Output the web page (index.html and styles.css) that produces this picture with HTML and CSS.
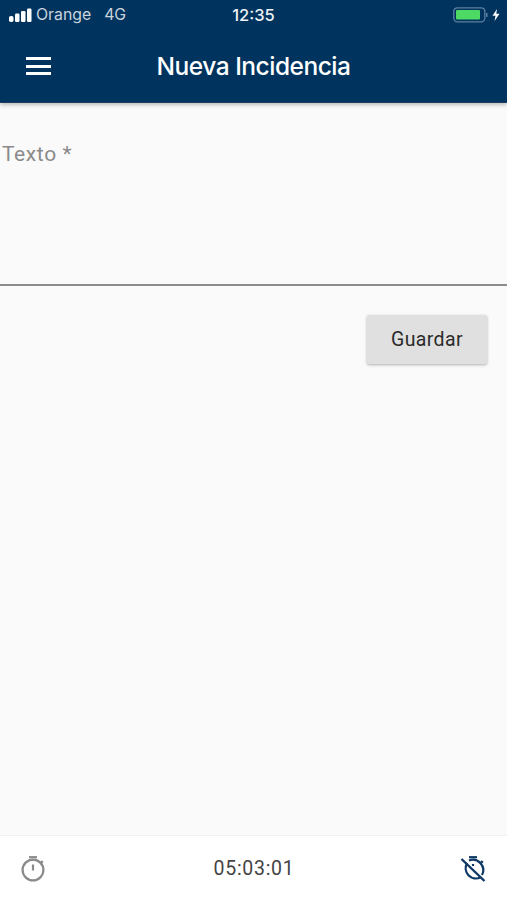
FILE: index.html
```
<!DOCTYPE html>
<html lang="es">
<head>
<meta charset="utf-8">
<title>Nueva Incidencia</title>
<link rel="stylesheet" href="styles.css">
</head>
<body>
<div class="app">
  <header class="header">
    <div class="status">
      <div class="status-left">
        <svg class="signal" width="23" height="14" viewBox="0 0 23 14"><rect x="0" y="8" width="4.500" height="6" rx="1.800"/><rect x="6" y="5.500" width="4.500" height="8.500" rx="1.200"/><rect x="12" y="3" width="4.500" height="11" rx="1.200"/><rect x="18" y="0.500" width="4.500" height="13.500" rx="1.200"/></svg>
        <span class="carrier">Orange</span>
        <span class="net">4G</span>
      </div>
      <div class="clock">12:35</div>
      <div class="status-right">
        <svg width="36" height="16" viewBox="0 0 36 16"><rect x="0.800" y="0.800" width="31" height="14" rx="3.500" fill="none" stroke="#5d7f9f" stroke-width="1.300"/><rect x="3" y="3" width="24" height="9.500" rx="1" fill="#4cd964"/><rect x="33" y="6" width="1.500" height="4" fill="#5d7f9f"/></svg>
        <svg width="8" height="12" viewBox="0 0 8 12"><path d="M5 0 L0.500 6.800 H3.500 L2.600 12 L7.500 4.800 H4.300 Z" fill="#fff"/></svg>
      </div>
    </div>
    <div class="toolbar">
      <button class="menu" aria-label="Menu"><span></span><span></span><span></span></button>
      <h1 class="title">Nueva Incidencia</h1>
    </div>
  </header>
  <main class="content">
    <div class="field">
      <label class="label">Texto *</label>
    </div>
    <div class="actions"><button class="save">Guardar</button></div>
  </main>
  <footer class="footer">
    <svg class="timer" width="28" height="28" viewBox="0 0 28 28" fill="none" stroke="#8a8a8a" stroke-width="2.200"><path d="M10 3.200 H18"/><circle cx="14" cy="16" r="10.400"/><path d="M14 10.500 V16.500"/><path d="M22 7 L23.800 8.800"/></svg>
    <span class="elapsed">05:03:01</span>
    <svg class="timer" width="28" height="28" viewBox="0 0 28 28" fill="none" stroke="#0d3764" stroke-width="2.200"><path d="M10 3.200 H18"/><path d="M8 9 A10.400 10.400 0 0 0 21.500 23.500 M23 21 A10.400 10.400 0 0 0 10 6.500"/><path d="M14 10 V12"/><path d="M22 7 L23.800 8.800"/><path d="M2.500 5 L25.500 27" stroke-width="2.400"/></svg>
  </footer>
</div>
</body>
</html>
```
FILE: styles.css
```
* { box-sizing: border-box; }
html, body { margin: 0; padding: 0; height: 100%; }
body { font-family: Roboto, "Liberation Sans", sans-serif; background: #fafafa; overflow: hidden; }
.app { height: 900px; display: flex; flex-direction: column; }
.header { height: 103px; flex: none; background: #00345f; color: #fff; box-shadow: 0 2px 4px rgba(0,0,0,.25); position: relative; border-bottom: 1px solid #1d3d63; }
.status { height: 30px; display: flex; align-items: center; justify-content: space-between; padding: 0 7px 0 9px; position: relative; }
.status-left { display: flex; align-items: center; color: #c9d4df; font: 15.800px/30px Inter, "Liberation Sans", sans-serif; }
.signal { fill: #fff; margin-right: 4px; }
.net { margin-left: 13px; }
.clock { position: absolute; left: 0; right: 0; text-align: center; font: 500 16.500px/30px Inter, "Liberation Sans", sans-serif; color: #eef2f5; }
.status-right { display: flex; align-items: center; gap: 3px; }
.toolbar { height: 72px; display: flex; align-items: center; position: relative; }
.menu { margin-left: 26px; width: 25px; height: 18px; padding: 0; border: 0; background: none; display: flex; flex-direction: column; justify-content: space-between; }
.menu span { display: block; height: 3px; background: #fff; }
.title { position: absolute; left: 0; right: 0; margin: 0; text-align: center; font: 500 24.500px/72px Inter, "Liberation Sans", sans-serif; letter-spacing: -.5px; color: #fff; }
.content { flex: 1; }
.field { height: 183px; border-bottom: 2px solid #8c8c8c; padding: 38px 0 0 2px; }
.label { display: block; font-size: 21px; line-height: 26px; color: #8a8a8a; letter-spacing: .6px; }
.actions { display: flex; justify-content: flex-end; padding: 29px 20px 0 0; }
.save { width: 120px; height: 49px; border: 0; border-radius: 2px; background: #e0e0e0; color: #2b2b2b; font: 400 19.500px Roboto, sans-serif; letter-spacing: .4px; box-shadow: 0 1px 3px rgba(0,0,0,.3); }
.footer { height: 65px; flex: none; background: #fff; border-top: 1px solid #f0f0f0; display: flex; align-items: center; justify-content: space-between; padding: 0 20px 0 19px; }
.elapsed { font: 19.500px Roboto, sans-serif; color: #444; letter-spacing: .7px; margin-left: 2px; }
.timer { display: block; }
```
